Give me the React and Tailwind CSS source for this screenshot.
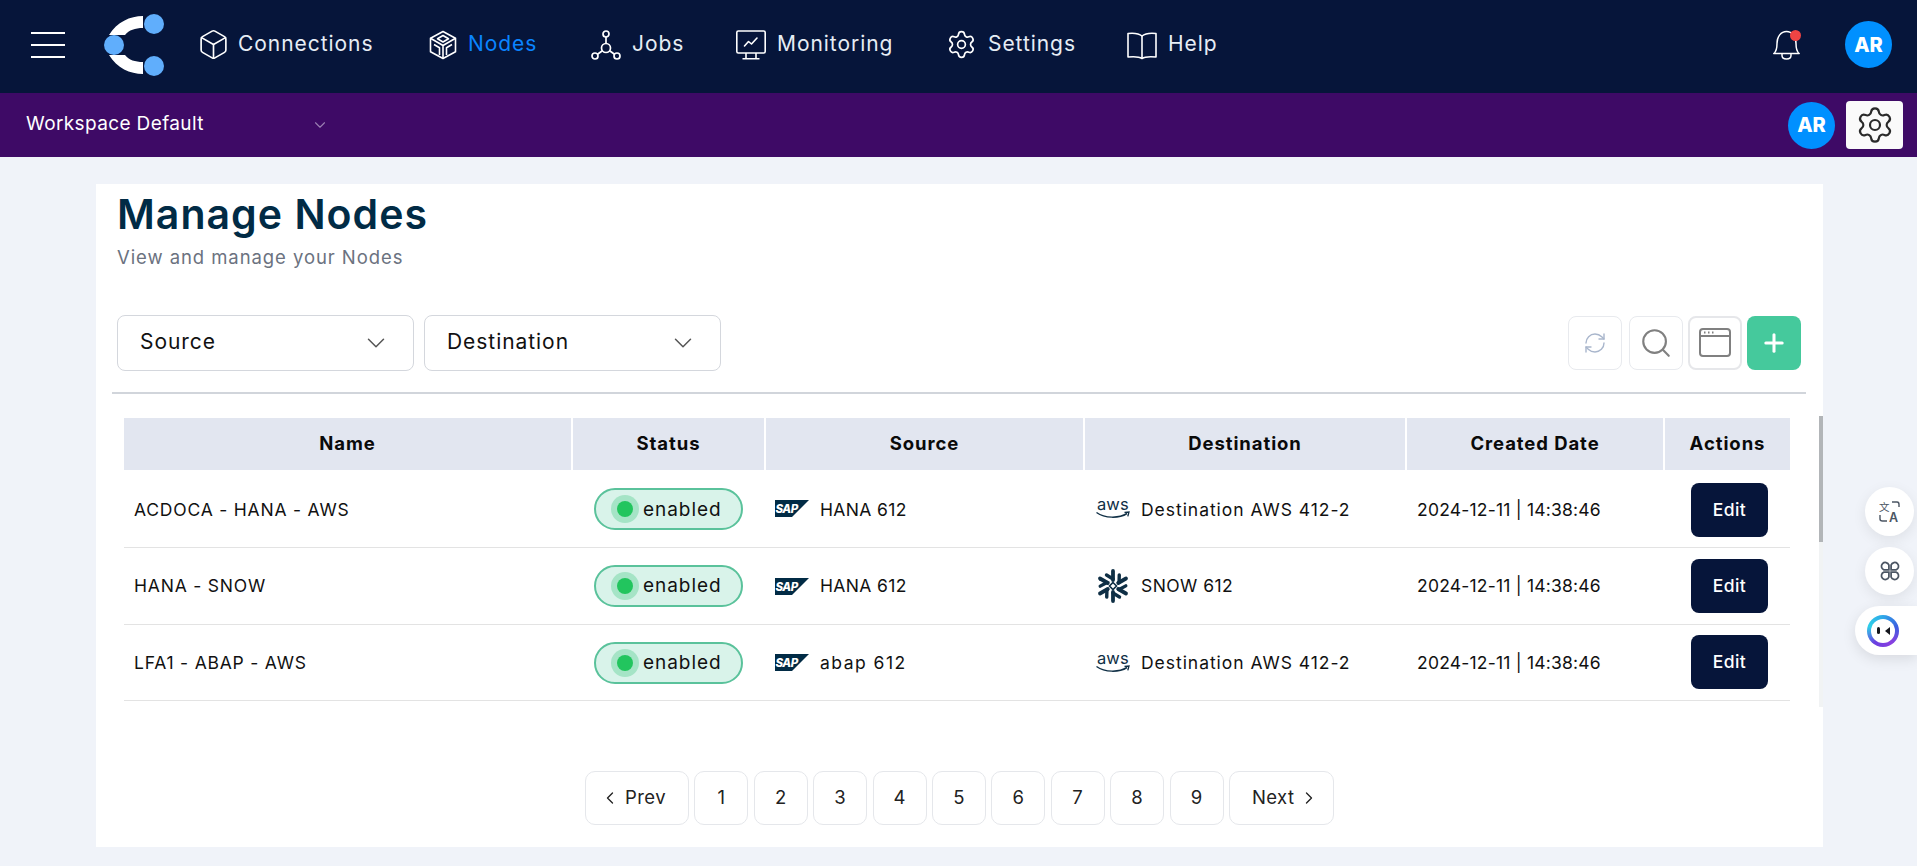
import React from 'react';
import { Box, ChevronDown, ChevronLeft, ChevronRight, Plus, RefreshCw, Search, Settings } from 'lucide-react';

const rows = [
    { name: 'ACDOCA - HANA - AWS', source: 'HANA 612', srcText: 'tracking-[0.02em]', dest: 'Destination AWS 412-2', destText: 'tracking-[0.055em]', destKind: 'aws', h: 'h-[78px]', shift: 'pt-[3px]', btn: 'mt-[2px] pt-[1px]' },
    { name: 'HANA - SNOW', source: 'HANA 612', srcText: 'tracking-[0.02em]', dest: 'SNOW 612', destText: 'tracking-[0.025em]', destKind: 'snow', h: 'h-[77px]', shift: '', btn: '' },
    { name: 'LFA1 - ABAP - AWS', source: 'abap 612', srcText: 'tracking-[0.085em]', dest: 'Destination AWS 412-2', destText: 'tracking-[0.055em]', destKind: 'aws', h: 'h-[76px]', shift: 'pt-[1px]', btn: 'mb-[2px] pt-[2px]' },
];

function Logo() {
    return (
        <svg width="60" height="62" viewBox="0 0 60 62">
            <path d="M39 2C26 2 13 8 5 21L21 21C25 16 31 14 39 14Z" fill="#fff" />
            <path d="M39 60C26 60 13 54 5 41L21 41C25 46 31 48 39 48Z" fill="#fff" />
            <circle cx="10" cy="31" r="10" fill="#60aefc" />
            <circle cx="50" cy="10" r="10" fill="#60aefc" />
            <circle cx="50" cy="52" r="10" fill="#60aefc" />
        </svg>
    );
}

function NodesIcon() {
    return (
        <svg width="28" height="30" viewBox="0 0 28 30" fill="none" stroke="#fff" strokeWidth="1.6" strokeLinejoin="round">
            <path d="M14 1.5 26.5 8.2V21.8L14 28.5 1.5 21.8V8.2Z" />
            <path d="M14 5.5 19.5 8.8 14 12 8.5 8.8Z" />
            <path d="M1.5 8.2 14 15.5 26.5 8.2M14 15.5V28.5" />
            <path d="M5 14.5 10.5 17.8V25M23 14.5 17.5 17.8V25" />
        </svg>
    );
}

function JobsIcon() {
    return (
        <svg width="30" height="30" viewBox="0 0 30 30" fill="none" stroke="#fff" strokeWidth="1.7">
            <circle cx="15" cy="4" r="3" />
            <circle cx="15" cy="18" r="4.5" />
            <circle cx="4" cy="26" r="3" />
            <circle cx="26" cy="26" r="3" />
            <path d="M15 7V13.5M11.4 20.7 6.5 24.3M18.6 20.7 23.5 24.3" />
        </svg>
    );
}

function MonitorIcon() {
    return (
        <svg width="30" height="30" viewBox="0 0 30 30" fill="none" stroke="#fff" strokeWidth="1.6">
            <rect x="0.8" y="1" width="28.4" height="22" rx="1.5" />
            <path d="M10 23V28.5M20 23V28.5M6.5 28.8H23.5" />
            <path d="M8.5 16 12.5 11.5 15.5 14 21 8" strokeLinecap="round" strokeLinejoin="round" />
        </svg>
    );
}

function BookIcon() {
    return (
        <svg width="30" height="30" viewBox="0 0 30 30" fill="none" stroke="#fff" strokeWidth="1.6" strokeLinejoin="round">
            <path d="M15 6C12 3.5 6 3 1 3.5V27C6 26.5 12 26.5 15 28.5 18 26.5 24 26.5 29 27V3.5C24 3 18 3.5 15 6Z" />
            <path d="M15 6V28.5" />
        </svg>
    );
}

function BellIcon() {
    return (
        <svg width="27" height="30" viewBox="0 0 27 30" fill="none" stroke="#fff" strokeWidth="1.5" strokeLinejoin="round">
            <path d="M0.8 23.5H26.2C23.5 21.5 23 18 23 13.5 23 6.5 19 1.5 13.5 1.5S4 6.5 4 13.5C4 18 3.5 21.5 0.8 23.5Z" />
            <path d="M9 23.5V25.5C9 27.8 11 29 13.5 29S18 27.8 18 25.5V23.5" />
        </svg>
    );
}

function WindowIcon() {
    return (
        <svg width="32" height="30" viewBox="0 0 32 30" fill="none" stroke="#808080" strokeWidth="2">
            <rect x="1" y="1" width="30" height="27" rx="3" />
            <path d="M1 8H31" />
            <path d="M5 4.5H6.5M9 4.5H10.5M13 4.5H14.5" strokeWidth="1.8" />
        </svg>
    );
}

function SapLogo() {
    return (
        <svg width="34" height="17" viewBox="0 0 34 17" className="shrink-0">
            <path d="M0 0H34L17 17H0Z" fill="#012b45" />
            <text x="0.5" y="12.5" fill="#fff" fontSize="11.5" fontWeight="800" fontStyle="italic" fontFamily="Inter, sans-serif" letterSpacing="-0.5">SAP</text>
        </svg>
    );
}

function AwsLogo() {
    return (
        <svg width="34" height="22" viewBox="0 0 34 22" className="shrink-0">
            <text x="1" y="12" fill="#0f2f45" fontSize="16.5" fontFamily="Inter, sans-serif" letterSpacing="0.1">aws</text>
            <path d="M0.5 14.5C9 20.5 23 20.5 31 15.5" fill="none" stroke="#0f2f45" strokeWidth="1.5" />
            <path d="M28.5 14.3 33 14 31.8 18.3" fill="none" stroke="#0f2f45" strokeWidth="1.3" />
        </svg>
    );
}

function SnowLogo() {
    return (
        <svg width="34" height="34" viewBox="0 0 34 34" className="shrink-0" fill="none" stroke="#0f2f45" strokeLinecap="round">
            {[0, 60, 120, 180, 240, 300].map(a => (
                <g key={a} transform={`rotate(${a} 17 17)`}>
                    <path d="M17 11V2" strokeWidth="3.8" />
                    <path d="M17 10 10.5 6" strokeWidth="3.4" />
                </g>
            ))}
            <path d="M17 13.5 20.5 17 17 20.5 13.5 17Z" strokeWidth="1.6" strokeLinecap="butt" />
        </svg>
    );
}

function NavItem({ w, icon, label, active }) {
    return (
        <div className={`flex items-center gap-[11px] ${w}`}>
            {icon}
            <span className={`mb-[2px] text-[21px] tracking-[0.045em] ${active ? 'text-[#0a84ff]' : 'text-[#e6edf5]'}`}>{label}</span>
        </div>
    );
}

function Avatar() {
    return (
        <div className="flex h-[47px] w-[47px] items-center justify-center rounded-full bg-[#0090ff] text-[20px] font-extrabold tracking-normal text-white">AR</div>
    );
}

function Select({ label }) {
    return (
        <div className="flex h-[56px] w-[297px] items-center justify-between rounded-lg border border-[#d4d7dd] pl-[22px] pr-[22px] text-[21px] tracking-[0.045em] text-[#111]">
            <span className="mb-[2px]">{label}</span>
            <ChevronDown size={30} strokeWidth={1.2} className="text-[#555]" />
        </div>
    );
}

function ToolButton({ className, children }) {
    return <div className={`flex h-[54px] w-[54px] items-center justify-center rounded-lg ${className}`}>{children}</div>;
}

function StatusBadge({ shift }) {
    return (
        <div className="flex h-[42px] w-[149px] items-center gap-[4px] rounded-full border-2 border-[#5ac29b] bg-[#d9f3ea] pl-[15px] text-[19px] tracking-[0.05em] text-[#111]">
            <div className="flex h-[28px] w-[28px] items-center justify-center rounded-full bg-[#a5e4c6]">
                <div className="h-[16px] w-[16px] rounded-full bg-[#22c55e]" />
            </div>
            <span className={shift}>enabled</span>
        </div>
    );
}

function PageButton({ className, children }) {
    return <div className={`flex h-[54px] items-center rounded-[10px] border border-[#e5e7eb] text-[18.5px] text-[#222] ${className}`}>{children}</div>;
}

const gridCols = 'grid grid-cols-[449px_193px_319px_322px_258px_125px]';

export default function App() {
    return (
        <div className="relative min-h-[866px] overflow-hidden bg-[#f0f3f9] font-['Inter',sans-serif] tracking-[0.025em]">
            {/* barra superior */}
            <header className="flex h-[93px] items-center bg-[#06153a] pb-[4px] pl-[31px] pr-[25px]">
                <div className="flex w-[34px] flex-col gap-[10px]">
                    <div className="h-[2px] bg-white" />
                    <div className="h-[2px] bg-white" />
                    <div className="h-[2px] bg-white" />
                </div>
                <div className="ml-[39px] mr-[35px]"><Logo /></div>
                <NavItem w="w-[230px]" icon={<Box size={33} strokeWidth={1.2} className="-ml-[2px] -mr-[3px] text-white" />} label="Connections" />
                <NavItem w="w-[162px]" icon={<NodesIcon />} label="Nodes" active />
                <NavItem w="w-[145px]" icon={<JobsIcon />} label="Jobs" />
                <NavItem w="w-[210px]" icon={<MonitorIcon />} label="Monitoring" />
                <NavItem w="w-[181px]" icon={<Settings size={31} strokeWidth={1.3} className="text-white" />} label="Settings" />
                <NavItem w="w-auto" icon={<BookIcon />} label="Help" />
                <div className="ml-auto flex items-center gap-[45px]">
                    <div className="relative">
                        <BellIcon />
                        <div className="absolute right-[-1px] top-0 h-[11px] w-[11px] rounded-full bg-[#ef4444]" />
                    </div>
                    <Avatar />
                </div>
            </header>

            {/* barra do workspace */}
            <div className="flex h-[64px] items-center bg-[#3e0a66] pl-[26px] pr-[14px]">
                <span className="mb-[2px] w-[285px] text-[19px] tracking-[0.02em] text-white">Workspace Default</span>
                <ChevronDown size={18} strokeWidth={1.5} className="text-[#9a7fb2]" />
                <div className="ml-auto flex items-center gap-[11px]">
                    <Avatar />
                    <div className="flex h-[48px] w-[57px] items-center justify-center rounded bg-[#fafafa]">
                        <Settings size={40} strokeWidth={1.3} className="text-[#2a2a2a]" />
                    </div>
                </div>
            </div>

            {/* conteúdo */}
            <main className="ml-[96px] mt-[27px] h-[663px] w-[1727px] bg-white">
                <div className="pl-[21px] pt-[6px]">
                    <h1 className="text-[41px] font-semibold leading-[48px] tracking-[0.025em] text-[#012b45]">Manage Nodes</h1>
                    <p className="mt-[5px] text-[18.5px] leading-[28px] tracking-[0.05em] text-[#6b7280]">View and manage your Nodes</p>
                </div>

                <div className="ml-[21px] mr-[22px] mt-[44px] flex items-center gap-[10px]">
                    <Select label="Source" />
                    <Select label="Destination" />
                    <div className="ml-auto flex items-center gap-[5px]">
                        <ToolButton className="mr-[2px] border border-[#e8eaee]"><RefreshCw size={24} strokeWidth={1.4} className="text-[#a9b6cc]" /></ToolButton>
                        <ToolButton className="border border-[#e8eaee]"><Search size={34} strokeWidth={1.5} className="text-[#808080]" /></ToolButton>
                        <ToolButton className="border-2 border-[#e6e7ea]"><WindowIcon /></ToolButton>
                        <ToolButton className="bg-[#45c99c]"><Plus size={28} strokeWidth={2.6} className="text-white" /></ToolButton>
                    </div>
                </div>

                <div className="ml-[16px] mr-[17px] mt-[21px] h-[2px] bg-[#d1d5db]" />

                {/* tabela */}
                <div className="mt-[22px] flex h-[291px]">
                    <div className="ml-[28px] w-[1666px] pt-[2px]">
                        <div className={`${gridCols} h-[52px] bg-[#e2e6f0] text-[18.5px] font-bold tracking-[0.05em] text-[#0a0a0a]`}>
                            {['Name', 'Status', 'Source', 'Destination', 'Created Date', 'Actions'].map((h, i) => (
                                <div key={h} className={`flex items-center justify-center ${i < 5 ? 'border-r-2 border-white' : ''}`}>{h}</div>
                            ))}
                        </div>
                        {rows.map(r => (
                            <div key={r.name} className={`${gridCols} ${r.h} items-center border-b border-[#e3e3e3] text-[17.5px] text-[#111]`}>
                                <div className={`pl-[10px] tracking-[0.045em] ${r.shift}`}>{r.name}</div>
                                <div className="pl-[21px]"><StatusBadge shift={r.shift} /></div>
                                <div className="flex items-center gap-[11px] pl-[9px]">
                                    <SapLogo />
                                    <span className={`${r.srcText} ${r.shift}`}>{r.source}</span>
                                </div>
                                <div className="flex items-center gap-[11px] pl-[11px]">
                                    {r.destKind === 'aws' ? <AwsLogo /> : <SnowLogo />}
                                    <span className={`${r.destText} ${r.shift}`}>{r.dest}</span>
                                </div>
                                <div className={`whitespace-nowrap pl-[10px] tracking-[0.012em] ${r.shift}`}>2024-12-11 | 14:38:46</div>
                                <div className="pl-[26px]">
                                    <div className={`flex h-[54px] w-[77px] items-center justify-center rounded-lg bg-[#06153a] text-[17.5px] font-medium text-white ${r.btn}`}>Edit</div>
                                </div>
                            </div>
                        ))}
                    </div>
                    <div className="ml-[29px] h-full w-[4px] bg-[#f1f3f4]">
                        <div className="h-[126px] bg-[#b2b5b8]" />
                    </div>
                </div>

                {/* paginação */}
                <div className="mt-[64px] flex justify-center gap-[5.4px]">
                    <PageButton className="w-[104px] gap-[5px] pl-[14px]"><ChevronLeft size={20} strokeWidth={1.6} />Prev</PageButton>
                    {[1, 2, 3, 4, 5, 6, 7, 8, 9].map(n => (
                        <PageButton key={n} className="w-[54px] justify-center">{n}</PageButton>
                    ))}
                    <PageButton className="w-[105px] gap-[5px] pl-[22px]">Next<ChevronRight size={20} strokeWidth={1.6} /></PageButton>
                </div>
            </main>

            {/* atalhos flutuantes */}
            <div className="absolute right-0 top-[487px] flex flex-col items-end gap-[11px]">
                <div className="mr-[3px] flex h-[49px] w-[49px] items-center justify-center rounded-full bg-white shadow-[0_4px_14px_rgba(0,0,0,0.08)]">
                    <svg width="22" height="22" viewBox="0 0 22 22" fill="none" stroke="#4b5563" strokeWidth="1.4">
                        <text x="0" y="10" fontSize="10.5" fill="#4b5563" stroke="none" fontFamily="'Noto Sans CJK SC', sans-serif">文</text>
                        <text x="10" y="21" fontSize="12.5" fontWeight="600" fill="#4b5563" stroke="none" fontFamily="Inter, sans-serif">A</text>
                        <path d="M13 1H18C19.5 1 20 2 20 3.5V6M1 14V18C1 19.5 2 20 3.5 20H8" />
                    </svg>
                </div>
                <div className="mr-[3px] flex h-[48px] w-[49px] items-center justify-center rounded-full bg-white shadow-[0_4px_14px_rgba(0,0,0,0.08)]">
                    <svg width="22" height="22" viewBox="0 0 20 20" fill="none" stroke="#4b5563" strokeWidth="1.6">
                        <path d="M9 9H4.5A3.5 3.5 0 1 1 9 4.5Z" />
                        <path d="M11 9H15.5A3.5 3.5 0 1 0 11 4.5Z" />
                        <path d="M9 11H4.5A3.5 3.5 0 1 0 9 15.5Z" />
                        <path d="M11 11H15.5A3.5 3.5 0 1 1 11 15.5Z" />
                    </svg>
                </div>
                <div className="flex h-[49px] w-[62px] items-center rounded-l-full bg-white pl-[12px] shadow-[0_4px_14px_rgba(0,0,0,0.1)]">
                    <div className="flex h-[32px] w-[32px] items-center justify-center rounded-full bg-[conic-gradient(#2fa8e8,#3b5fe0,#8a3fe0,#6a3fe0,#2fd0e8,#2fa8e8)]">
                        <div className="flex h-[24px] w-[24px] items-center justify-center gap-[5px] rounded-full bg-white">
                            <div className="h-[7px] w-[3px] rounded-sm bg-[#14161c]" />
                            <svg width="5" height="8" viewBox="0 0 5 8"><path d="M5 0V8L0 4Z" fill="#14161c" /></svg>
                        </div>
                    </div>
                </div>
            </div>
        </div>
    );
}
